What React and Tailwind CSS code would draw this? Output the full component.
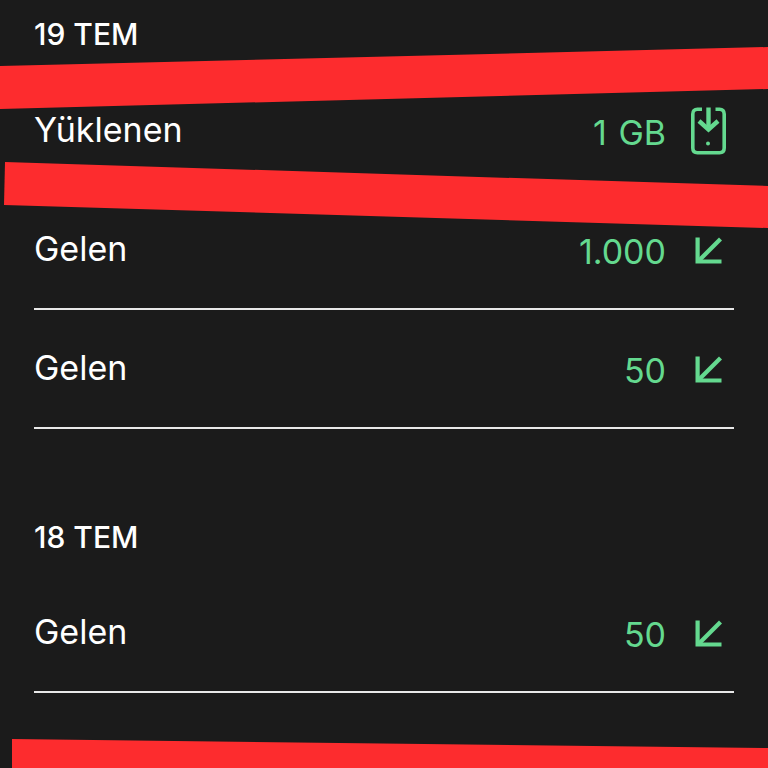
import React from "react";

const FONT = { fontFamily: "Inter, sans-serif" };

function ArrowIcon() {
  return (
    <svg width="30" height="30" viewBox="0 0 30 30" fill="none" stroke="#64d98f" strokeWidth="4.200" className="block">
      <path d="M3.600 2.500V26.500H27.500" />
      <path d="M4.500 26L26.500 4" />
    </svg>
  );
}

function PhoneIcon() {
  return (
    <svg width="36" height="50" viewBox="0 0 36 50" fill="none" stroke="#64d98f" className="block">
      <path d="M11 3.300H6.500Q1.800 3.300 1.800 8V42Q1.800 46.700 6.500 46.700H28.500Q33.200 46.700 33.200 42V8Q33.200 3.300 28.500 3.300H24.500" strokeWidth="3.600" />
      <path d="M17.500 1.500V24" strokeWidth="4.400" />
      <path d="M8 15L17.500 23.500L27 15" strokeWidth="4.400" />
      <circle cx="17" cy="37.500" r="2" fill="#64d98f" stroke="none" />
    </svg>
  );
}

function Row({ label, value, icon }) {
  return (
    <div className="flex h-[119px] items-center justify-between border-b-2 border-[#e8e8e8]">
      <span className="-mt-[1px] text-[34px] leading-none text-white">{label}</span>
      <div className="flex items-center">
        <span className="mt-[5px] text-[34px] leading-none text-[#64d98f] [word-spacing:2px]">{value}</span>
        <div className="mr-[4px] ml-[22px] flex w-[42px] justify-center">{icon}</div>
      </div>
    </div>
  );
}

export default function App() {
  return (
    <div className="relative h-[768px] w-[768px] overflow-hidden bg-[#1b1b1b]" style={FONT}>
      <div className="px-[34px] pt-[17px]">
        <div className="text-[30px] leading-[34px] font-medium text-white">19 TEM</div>
        <div className="mt-[21px]">
          <Row label="Yüklenen" value="1 GB" icon={<PhoneIcon />} />
          <Row label="Gelen" value="1.000" icon={<ArrowIcon />} />
          <Row label="Gelen" value="50" icon={<ArrowIcon />} />
        </div>
        <div className="mt-[91px] text-[30px] leading-[34px] font-medium text-white">18 TEM</div>
        <div className="mt-[20px]">
          <Row label="Gelen" value="50" icon={<ArrowIcon />} />
        </div>
      </div>

      {/* kırmızı karalamalar */}
      <svg width="768" height="768" viewBox="0 0 768 768" className="absolute inset-0">
        <polygon points="0,66 768,47 768,89 0,109" fill="#fd2c2e" />
        <polygon points="5,162 768,186 768,228 4,205" fill="#fd2c2e" />
        <polygon points="12,739 768,748 768,768 12,768" fill="#fd2c2e" />
      </svg>
    </div>
  );
}
